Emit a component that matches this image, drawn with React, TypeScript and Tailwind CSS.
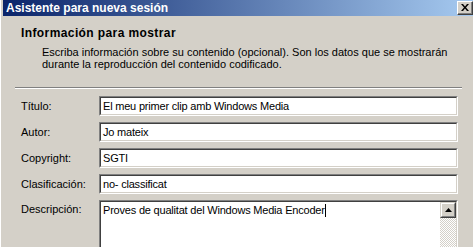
import React from "react";

const Field = ({ value }: { value: string }) => (
  <div className="h-[20px] border-t border-l border-t-[#808080] border-l-[#808080] border-b border-r border-b-white border-r-white">
    <div className="h-full border-t border-l border-t-[#404040] border-l-[#404040] border-b border-r border-b-[#d4d0c8] border-r-[#d4d0c8] bg-white pl-[2px] flex items-center text-[11px] leading-[13px] tracking-[-0.2px] text-black whitespace-nowrap overflow-hidden">
      {value}
    </div>
  </div>
);

export default function App() {
  const rows: [string, string][] = [
    ["Título:", "El meu primer clip amb Windows Media"],
    ["Autor:", "Jo mateix"],
    ["Copyright:", "SGTI"],
    ["Clasificación:", "no- classificat"],
  ];
  return (
    <div
      className="w-[473px] h-[247px] overflow-hidden bg-[#d4d0c8] text-black flex flex-col border-l border-l-white"
      style={{ fontFamily: '"Liberation Sans", Arial, sans-serif' }}
    >
      {/* title bar */}
      <div className="ml-[2px] h-[16px] shrink-0 bg-[linear-gradient(to_right,#0a246a,#a6caf0)] flex items-center justify-between">
        <span className="pl-[3px] text-white font-bold text-[12px] leading-[16px] whitespace-nowrap">
          Asistente para nueva sesión
        </span>
        <div className="mr-0 mt-[1px] self-start w-[16px] h-[14px] border-t border-l border-t-white border-l-white border-b border-r border-b-[#404040] border-r-[#404040]">
          <div className="w-full h-full bg-[#d4d0c8] border-b border-r border-b-[#808080] border-r-[#808080] flex items-center justify-center">
            <svg width="8" height="7" viewBox="0 0 8 7">
              <path d="M0 0h2l2 2.5L6 0h2L5 3.5 8 7H6L4 4.5 2 7H0l3-3.5z" fill="#000" />
            </svg>
          </div>
        </div>
      </div>

      {/* header */}
      <div className="pl-[20px] pt-[11px]">
        <div className="font-bold text-[12px] leading-[13px] tracking-[0.4px]">Información para mostrar</div>
        <div className="pl-[21px] mt-[6px] text-[11px] leading-[12px] w-[440px]">
          <div className="whitespace-nowrap">
            Escriba información sobre su contenido (opcional). Son los datos que se mostrarán
          </div>
          <div className="whitespace-nowrap">durante la reproducción del contenido codificado.</div>
        </div>
      </div>

      {/* separator */}
      <div className="ml-[14px] mt-[17px] w-[447px] border-t border-t-[#808080] border-b border-b-white" />

      {/* form */}
      <div className="ml-[19px] mt-[7px] grid grid-cols-[79px_359px] gap-y-[6px] text-[11px] leading-[13px]">
        {rows.map(([label, value]) => (
          <React.Fragment key={label}>
            <div className="flex items-center pl-[1px]">{label}</div>
            <Field value={value} />
          </React.Fragment>
        ))}
        <div className="pl-[1px] pt-[3px]">Descripción:</div>
        <div className="h-[60px] border-t border-l border-t-[#808080] border-l-[#808080] border-r border-r-white">
          <div className="h-full border-t border-l border-t-[#404040] border-l-[#404040] border-r border-r-[#d4d0c8] bg-white flex">
            <div className="flex-1 pl-[2px] pt-[2px] whitespace-nowrap tracking-[-0.2px]">
              <span>Proves de qualitat del Windows Media Encoder</span>
              <span className="inline-block w-[1px] h-[13px] bg-black align-top" />
            </div>
            <div className="w-[16px] flex flex-col">
              <div className="h-[16px] border-t border-l border-t-[#d4d0c8] border-l-[#d4d0c8] border-b border-r border-b-[#404040] border-r-[#404040]">
                <div className="w-full h-full bg-[#d4d0c8] border-t border-l border-t-white border-l-white border-b border-r border-b-[#808080] border-r-[#808080] flex items-center justify-center">
                  <svg width="7" height="4" viewBox="0 0 7 4">
                    <path d="M3.5 0L7 4H0z" fill="#000" />
                  </svg>
                </div>
              </div>
              <div className="flex-1 bg-[repeating-conic-gradient(#ffffff_0_25%,#d4d0c8_0_50%)] bg-[length:2px_2px]" />
            </div>
          </div>
        </div>
      </div>
    </div>
  );
}
